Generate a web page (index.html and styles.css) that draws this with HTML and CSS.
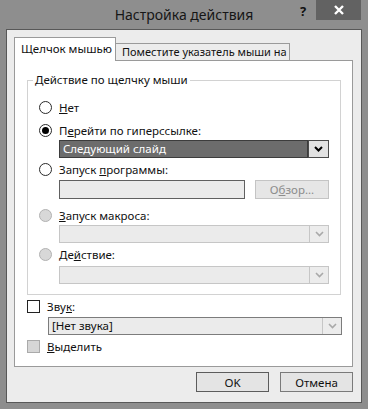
FILE: index.html
```html
<!DOCTYPE html>
<html lang="ru">
<head>
  <meta charset="UTF-8">
  <title>Настройка действия</title>
  <link rel="stylesheet" href="styles.css">
</head>
<body>
  <div class="window">
    <div class="titlebar">
      <div class="title">Настройка действия</div>
      <div class="controls">
        <div class="help">?</div>
        <div class="close">
          <svg width="12" height="10" viewBox="0 0 12 10"><path d="M2 1 L10 9 M10 1 L2 9" stroke="#fff" stroke-width="2.4" fill="none"/></svg>
        </div>
      </div>
    </div>
    <div class="client">
      <div class="tabs">
        <div class="tab active">Щелчок мышью</div>
        <div class="tab other">Поместите указатель мыши на</div>
      </div>
      <div class="panel">
        <fieldset class="group">
          <legend>Действие по щелчку мыши</legend>
          <div class="group-body">
            <div class="opt"><span class="radio"></span><span><u>Н</u>ет</span></div>
            <div class="opt r2"><span class="radio checked"></span><span>П<u>е</u>рейти по гиперссылке:</span></div>
            <div class="combo active-combo c1">
              <div class="value">Следующий слайд</div>
              <div class="arrow"><svg width="9" height="6" viewBox="0 0 9 6"><path d="M1 1 L4.5 4.5 L8 1" stroke="#000" stroke-width="2" fill="none"/></svg></div>
            </div>
            <div class="opt r3"><span class="radio"></span><span>Запуск <u>п</u>рограммы:</span></div>
            <div class="file-row">
              <div class="textbox"></div>
              <div class="browse">О<u>б</u>зор...</div>
            </div>
            <div class="opt r4"><span class="radio disabled"></span><span><u>З</u>апуск макроса:</span></div>
            <div class="combo c2">
              <div class="value"></div>
              <div class="arrow"><svg width="9" height="6" viewBox="0 0 9 6"><path d="M1 1 L4.5 4.5 L8 1" stroke="#a9a9a9" stroke-width="1.6" fill="none"/></svg></div>
            </div>
            <div class="opt r5"><span class="radio disabled"></span><span>Де<u>й</u>ствие:</span></div>
            <div class="combo c3">
              <div class="value"></div>
              <div class="arrow"><svg width="9" height="6" viewBox="0 0 9 6"><path d="M1 1 L4.5 4.5 L8 1" stroke="#a9a9a9" stroke-width="1.6" fill="none"/></svg></div>
            </div>
          </div>
        </fieldset>
        <div class="check-row sound-row"><span class="check"></span><span>Зву<u>к</u>:</span></div>
        <div class="combo sound">
          <div class="value">[Нет звука]</div>
          <div class="arrow"><svg width="9" height="6" viewBox="0 0 9 6"><path d="M1 1 L4.5 4.5 L8 1" stroke="#a9a9a9" stroke-width="1.6" fill="none"/></svg></div>
        </div>
        <div class="check-row mark-row"><span class="check disabled"></span><span><u>В</u>ыделить</span></div>
      </div>
      <div class="buttons">
        <button class="btn default">OK</button>
        <button class="btn">Отмена</button>
      </div>
    </div>
  </div>
</body>
</html>
```

FILE: styles.css
```css
body {
  margin: 0;
  font-family: "Noto Sans", "Open Sans", sans-serif;
  font-size: 11.5px;
  color: #111;
}
.window {
  width: 368px;
  height: 409px;
  background: #8e8e8e;
  display: flex;
  flex-direction: column;
}
.titlebar {
  height: 29px;
  display: grid;
}
.title {
  grid-area: 1 / 1;
  text-align: center;
  font-size: 14px;
  line-height: 30px;
  color: #161616;
}
.controls {
  grid-area: 1 / 1;
  justify-self: end;
  display: flex;
  align-items: flex-start;
  margin-right: 7px;
}
.help {
  width: 26px;
  text-align: center;
  font-weight: bold;
  font-size: 13px;
  line-height: 22px;
  color: #111;
}
.close {
  width: 45px;
  height: 20px;
  background: #626262;
  display: flex;
  align-items: center;
  justify-content: center;
}
.client {
  flex: 1;
  margin: 0 6px 6px;
  border: 1px solid #585858;
  background: #ececec;
  padding: 7px 8px 0 7px;
}
.tabs {
  display: flex;
  height: 24px;
  margin-bottom: -1px;
  position: relative;
  z-index: 1;
}
.tab {
  border: 1px solid #9a9a9a;
  border-bottom: none;
  box-sizing: border-box;
  line-height: 16px;
  white-space: nowrap;
}
.tab.active {
  width: 102px;
  height: 24px;
  background: #fff;
  padding: 3px 0 0 6px;
  position: relative;
  z-index: 1;
}
.tab.other {
  width: 175px;
  height: 17px;
  margin-top: 6px;
  margin-left: -1px;
  background: #ececec;
  padding-left: 6px;
  font-size: 11px;
}
.panel {
  height: 307px;
  box-sizing: border-box;
  background: #fff;
  border: 1px solid #9a9a9a;
}
.group {
  margin: 11px 11px 0 12px;
  padding: 0;
  border: 1px solid #d2d2d2;
}
.group legend {
  margin-left: 5px;
  padding: 0 2px;
  line-height: 16px;
}
.group-body {
  padding: 11px 11px 10px;
}
.opt,
.check-row {
  display: flex;
  align-items: center;
  gap: 7px;
  height: 16px;
  white-space: nowrap;
}
.r2 { margin-top: 7px; }
.r3 { margin-top: 3px; }
.r4 { margin-top: 8px; }
.r5 { margin-top: 3px; }
.radio {
  width: 13px;
  height: 13px;
  box-sizing: border-box;
  border-radius: 50%;
  border: 1px solid #2a2a2a;
  background: #fff;
  display: flex;
  align-items: center;
  justify-content: center;
}
.radio.checked::after {
  content: "";
  width: 7px;
  height: 7px;
  border-radius: 50%;
  background: #000;
}
.radio.disabled {
  background: #d8d8d8;
  border-color: #b2b2b2;
}
.combo {
  display: flex;
  height: 18px;
  box-sizing: border-box;
  margin-left: 20px;
  border: 1px solid #c6c6c6;
  background: #ebebeb;
}
.combo .value {
  flex: 1;
  padding-left: 3px;
  line-height: 16px;
  white-space: nowrap;
}
.combo .arrow {
  width: 18px;
  border-left: 1px solid #c6c6c6;
  background: #ececec;
  display: flex;
  align-items: center;
  justify-content: center;
}
.c1 { margin-top: 2px; }
.c2 { margin-top: 2px; }
.c3 { margin-top: 4px; }
.active-combo {
  border: none;
  background: none;
}
.active-combo .value {
  border: 1px solid #3c3c3c;
  background: #6c6c6c;
  color: #fff;
  line-height: 16px;
}
.active-combo .arrow {
  width: 19px;
  border: 1px solid #4a4a4a;
  background: #e2e2e2;
}
.file-row {
  display: flex;
  gap: 10px;
  margin: 3px 0 0 20px;
  height: 19px;
}
.textbox {
  width: 186px;
  box-sizing: border-box;
  border: 1px solid #606060;
  background: #ebebeb;
}
.browse {
  width: 74px;
  box-sizing: border-box;
  border: 1px solid #c4c4c4;
  background: #e6e6e6;
  color: #8c8c8c;
  text-align: center;
  line-height: 17px;
}
.check {
  width: 13px;
  height: 13px;
  box-sizing: border-box;
  border: 1px solid #222;
  background: #fff;
}
.check.disabled {
  background: #d6d6d6;
  border-color: #aaa;
}
.sound-row {
  margin: 3px 0 0 12px;
}
.combo.sound {
  margin: 3px 0 0 33px;
  width: 294px;
  border-color: #7c7c7c;
}
.mark-row {
  margin: 3px 0 0 12px;
}
.buttons {
  display: flex;
  justify-content: flex-end;
  gap: 11px;
  margin-top: 5px;
}
.btn {
  width: 73px;
  height: 20px;
  border: 1px solid #7a7a7a;
  background: #e4e4e4;
  font-family: inherit;
  font-size: 11.5px;
  color: #111;
  padding: 0;
}
.btn.default {
  border-color: #5c5c5c;
}
```
